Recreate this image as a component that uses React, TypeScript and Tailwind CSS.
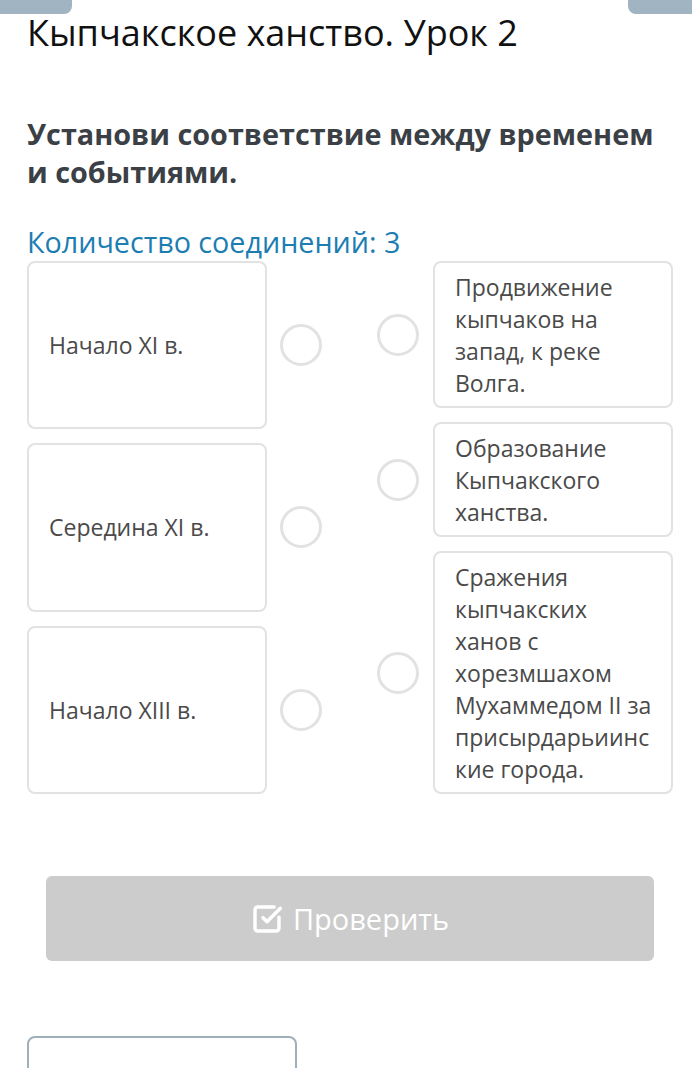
import { SquareCheckBig } from "lucide-react";

const leftItems = ["Начало XI в.", "Середина XI в.", "Начало XIII в."];

const rightItems = [
  ["Продвижение", "кыпчаков на", "запад, к реке", "Волга."],
  ["Образование", "Кыпчакского", "ханства."],
  [
    "Сражения",
    "кыпчакских",
    "ханов с",
    "хорезмшахом",
    "Мухаммедом II за",
    "присырдарьиинс",
    "кие города.",
  ],
];

function Dot() {
  return (
    <div className="h-[42px] w-[42px] shrink-0 rounded-full border-[3px] border-[#e2e2e2] bg-white" />
  );
}

export default function App() {
  return (
    <div
      className="h-[1068px] overflow-hidden bg-white"
      style={{ fontFamily: '"Open Sans", "Noto Sans", sans-serif' }}
    >
      <div className="flex h-[14px] justify-between">
        <div className="w-[72px] rounded-br-lg bg-[#a0b4c1]" />
        <div className="w-[64px] rounded-bl-lg bg-[#a0b4c1]" />
      </div>

      <div className="pl-[27px] pr-[19px]">
        <h1 className="mt-[-3px] text-[36px] leading-[44px] text-[#111]">
          Кыпчакское ханство. Урок 2
        </h1>

        <h2 className="mt-[60px] text-[28.8px] font-bold leading-[38px] text-[#3b3f46]">
          Установи соответствие между временем и событиями.
        </h2>

        <p className="mt-[34px] text-[28.7px] leading-[34px] text-[#1c7db3]">
          Количество соединений: 3
        </p>

        <div className="mt-[2px] flex justify-between">
          <div className="flex flex-col gap-[14px]">
            {leftItems.map((t) => (
              <div key={t} className="flex flex-1 items-center">
                <div className="flex h-full w-[240px] items-center rounded-lg border-2 border-[#e2e2e2] px-5 text-[23px] leading-[32px] text-[#4a4a4a]">
                  {t}
                </div>
                <div className="ml-[13px]">
                  <Dot />
                </div>
              </div>
            ))}
          </div>

          <div className="flex flex-col gap-[14px]">
            {rightItems.map((lines, i) => (
              <div key={i} className="flex items-center">
                <Dot />
                <div className="ml-[14px] w-[240px] rounded-lg border-2 border-[#e2e2e2] py-[7.5px] pl-5 pr-2 text-[23px] leading-[32px] text-[#4a4a4a]">
                  {lines.map((l) => (
                    <div key={l} className="whitespace-nowrap">
                      {l}
                    </div>
                  ))}
                </div>
              </div>
            ))}
          </div>
        </div>

        <div className="mt-[82px] px-[19px]">
          <button className="flex h-[85px] w-full items-center justify-center gap-[10px] rounded-md bg-[#cccccc] text-[29px] text-white">
            <SquareCheckBig className="h-[32px] w-[32px]" strokeWidth={2.6} />
            Проверить
          </button>
        </div>

        <div className="mt-[75px] h-[60px] w-[270px] rounded-lg border-2 border-[#9fb0ba]" />
      </div>
    </div>
  );
}
